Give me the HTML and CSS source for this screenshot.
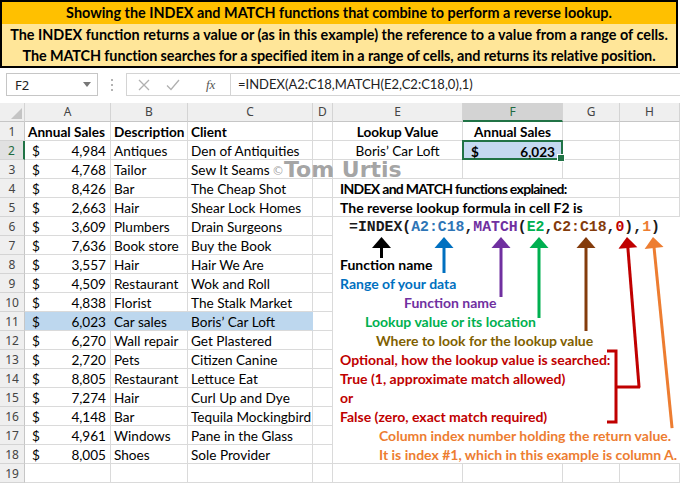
FILE: index.html
```html
<!DOCTYPE html>
<html>
<head>
<meta charset="utf-8">
<link rel="stylesheet" href="styles.css">
</head>
<body>
<div class="page">
  <div class="banner">
    <div class="b1">Showing the INDEX and MATCH functions that combine to perform a reverse lookup.</div>
    <div class="b2">The INDEX function returns a value or (as in this example) the reference to a value from a range of cells.</div>
    <div class="b2 b3">The MATCH function searches for a specified item in a range of cells, and returns its relative position.</div>
  </div>
  <div class="fbar">
    <div class="namebox"><span>F2</span><svg class="caret" width="8" height="5" viewBox="0 0 8 5"><polygon points="0,0 8,0 4,5" fill="#777"/></svg></div>
    <div class="dots"><svg width="4" height="14" viewBox="0 0 4 14"><circle cx="2" cy="2" r="1" fill="#9a9a9a"/><circle cx="2" cy="7" r="1" fill="#9a9a9a"/><circle cx="2" cy="12" r="1" fill="#9a9a9a"/></svg></div>
    <div class="fxbox">
      <div class="btns">
        <svg class="ico" width="12" height="12" viewBox="0 0 12 12"><path d="M1 1L11 11M11 1L1 11" stroke="#b0b0b0" stroke-width="1.3" fill="none"/></svg>
        <svg class="ico" width="14" height="12" viewBox="0 0 14 12"><path d="M1 6.5L5 10.5L13 1" stroke="#b0b0b0" stroke-width="1.3" fill="none"/></svg>
        <span class="fx">fx</span>
      </div>
      <div class="formula">=INDEX(A2:C18,MATCH(E2,C2:C18,0),1)</div>
    </div>
  </div>
  <div class="sheet">
    <div class="h corner"><svg width="11" height="11" viewBox="0 0 11 11"><polygon points="11,0 11,11 0,11" fill="#c4c4c4"/></svg></div>
    <div class="h">A</div><div class="h">B</div><div class="h">C</div><div class="h">D</div><div class="h">E</div><div class="h sel">F</div><div class="h">G</div><div class="h">H</div>

    <div class="rh">1</div><div class="c bd">Annual Sales</div><div class="c bd">Description</div><div class="c bd">Client</div><div class="c"></div><div class="c bd ctr">Lookup Value</div><div class="c bd ctr">Annual Sales</div><div class="c"></div><div class="c"></div>

    <div class="rh sel">2</div><div class="c a"><span>$</span><span>4,984</span></div><div class="c">Antiques</div><div class="c">Den of Antiquities</div><div class="c"></div><div class="c ctr">Boris’ Car Loft</div><div class="c a f2"><span>$</span><span>6,023</span></div><div class="c"></div><div class="c"></div>

    <div class="rh">3</div><div class="c a"><span>$</span><span>4,768</span></div><div class="c">Tailor</div><div class="c">Sew It Seams</div><div class="c"></div><div class="c"></div><div class="c"></div><div class="c"></div><div class="c"></div>

    <div class="rh">4</div><div class="c a"><span>$</span><span>8,426</span></div><div class="c">Bar</div><div class="c">The Cheap Shot</div><div class="c"></div><div class="c bd span3 ind tight">INDEX and MATCH functions explained:</div><div class="c"></div>

    <div class="rh">5</div><div class="c a"><span>$</span><span>2,663</span></div><div class="c">Hair</div><div class="c">Shear Lock Homes</div><div class="c"></div><div class="c bd span3 ind big">The reverse lookup formula in cell F2 is</div><div class="c"></div>

    <div class="rh">6</div><div class="c a"><span>$</span><span>3,609</span></div><div class="c">Plumbers</div><div class="c">Drain Surgeons</div><div class="c"></div>
    <div class="notes">
      <div class="ln code"><span class="k">=INDEX(</span><span class="cb">A2:C18</span><span class="k">,</span><span class="cp">MATCH</span><span class="k">(</span><span class="cg">E2</span><span class="k">,</span><span class="cbr">C2:C18</span><span class="k">,</span><span class="cr">0</span><span class="k">),</span><span class="co">1</span><span class="k">)</span></div>
      <div class="ln"></div>
      <div class="ln t-black">Function name</div>
      <div class="ln t-blue">Range of your data</div>
      <div class="ln t-purple">Function name</div>
      <div class="ln t-green">Lookup value or its location</div>
      <div class="ln t-brown">Where to look for the lookup value</div>
      <div class="ln t-red">Optional, how the lookup value is searched:</div>
      <div class="ln t-red">True (1, approximate match allowed)</div>
      <div class="ln t-red">or</div>
      <div class="ln t-red">False (zero, exact match required)</div>
      <div class="ln t-orange">Column index number holding the return value.</div>
      <div class="ln t-orange">It is index #1, which in this example is column A.</div>
    </div>

    <div class="rh">7</div><div class="c a"><span>$</span><span>7,636</span></div><div class="c">Book store</div><div class="c">Buy the Book</div><div class="c"></div>
    <div class="rh">8</div><div class="c a"><span>$</span><span>3,557</span></div><div class="c">Hair</div><div class="c">Hair We Are</div><div class="c"></div>
    <div class="rh">9</div><div class="c a"><span>$</span><span>4,509</span></div><div class="c">Restaurant</div><div class="c">Wok and Roll</div><div class="c"></div>
    <div class="rh">10</div><div class="c a"><span>$</span><span>4,838</span></div><div class="c">Florist</div><div class="c">The Stalk Market</div><div class="c"></div>
    <div class="rh">11</div><div class="c a hl"><span>$</span><span>6,023</span></div><div class="c hl">Car sales</div><div class="c hl">Boris’ Car Loft</div><div class="c"></div>
    <div class="rh">12</div><div class="c a"><span>$</span><span>6,270</span></div><div class="c">Wall repair</div><div class="c">Get Plastered</div><div class="c"></div>
    <div class="rh">13</div><div class="c a"><span>$</span><span>2,720</span></div><div class="c">Pets</div><div class="c">Citizen Canine</div><div class="c"></div>
    <div class="rh">14</div><div class="c a"><span>$</span><span>8,805</span></div><div class="c">Restaurant</div><div class="c">Lettuce Eat</div><div class="c"></div>
    <div class="rh">15</div><div class="c a"><span>$</span><span>7,274</span></div><div class="c">Hair</div><div class="c">Curl Up and Dye</div><div class="c"></div>
    <div class="rh">16</div><div class="c a"><span>$</span><span>4,148</span></div><div class="c">Bar</div><div class="c">Tequila Mockingbird</div><div class="c"></div>
    <div class="rh">17</div><div class="c a"><span>$</span><span>4,961</span></div><div class="c">Windows</div><div class="c">Pane in the Glass</div><div class="c"></div>
    <div class="rh">18</div><div class="c a"><span>$</span><span>8,005</span></div><div class="c">Shoes</div><div class="c">Sole Provider</div><div class="c"></div>

    <div class="rh">19</div><div class="c"></div><div class="c"></div><div class="c"></div><div class="c"></div><div class="c"></div><div class="c"></div><div class="c"></div><div class="c"></div>
  </div>

  <div class="wm"><span class="copy">©</span>Tom Urtis</div>

  <svg class="arrows" width="680" height="483" viewBox="0 0 680 483">
    <g fill="#000"><polygon points="381.5,237 372,248 391,248"/><rect x="380" y="247" width="3" height="11"/></g>
    <g fill="#0070c0"><polygon points="444,237 434.5,248 453.5,248"/><rect x="442.5" y="247" width="3" height="26"/></g>
    <g fill="#7030a0"><polygon points="501,237 491.5,248 510.5,248"/><rect x="499.5" y="247" width="3" height="50"/></g>
    <g fill="#00b050"><polygon points="539,237 529.5,248 548.5,248"/><rect x="537.5" y="247" width="3" height="71"/></g>
    <g fill="#843c0c"><polygon points="586,237 576.5,248 595.5,248"/><rect x="584.5" y="247" width="3" height="84"/></g>
    <g fill="#c00000" transform="rotate(-4.6 627 237)"><polygon points="627,237 617.5,248 636.5,248"/><rect x="625.5" y="247" width="3" height="141"/></g>
    <path d="M607 351H616V422H607M616 387H640" stroke="#c00000" stroke-width="3" fill="none"/>
    <g fill="#ed7d31" transform="rotate(-5.7 653 237)"><polygon points="653,237 643.5,248 662.5,248"/><rect x="651.5" y="247" width="3" height="182"/></g>
  </svg>
</div>
</body>
</html>
```
FILE: styles.css
```css
* { box-sizing: border-box; }
body { margin: 0; background: #fff; font-family: Lato, "Liberation Sans", sans-serif; color: #000; }
.page { position: relative; width: 680px; height: 483px; overflow: hidden; }

.banner { width: 678px; height: 68px; border: 2px solid #000; display: flex; flex-direction: column; font-weight: 700; font-size: 14.4px; text-align: center; white-space: nowrap; }
.b1 { height: 22px; line-height: 22px; background: #ffc000; }
.b2 { height: 21px; line-height: 21px; background: #ffe699; }
.b3 { letter-spacing: -0.1px; }

.fbar { height: 35px; display: flex; align-items: flex-start; padding: 5px 0 0 6px; }
.namebox { width: 92px; height: 23px; border: 1px solid #c6c6c6; display: flex; align-items: center; justify-content: space-between; padding: 0 6px 0 8px; font: 13px "Noto Sans", sans-serif; color: #222; }
.dots { width: 28px; height: 23px; display: flex; align-items: center; justify-content: center; }
.fxbox { flex: 1; height: 23px; border: 1px solid #d4d4d4; border-right: none; display: flex; }
.btns { width: 104px; border-right: 1px solid #d4d4d4; display: flex; align-items: center; padding-left: 11px; gap: 16px; }
.fx { font: italic 13px "Liberation Serif", serif; color: #555; margin-left: 10px; }
.formula { padding-left: 7px; font-size: 13px; line-height: 21px; color: #222; white-space: nowrap; }

.sheet { display: grid; grid-template-columns: 25px 86px 77px 125px 20px 130px 100px 57px 60px; grid-auto-rows: 19px; font-size: 13.6px; }
.h { background: #efefef; border-right: 1px solid #d4d4d4; border-bottom: 1px solid #c6c6c6; text-align: center; font: 12px "Noto Sans", sans-serif; color: #444; line-height: 18px; }
.h.sel { background: #d3d3d3; color: #1e6b41; border-bottom: 2px solid #217346; }
.corner { display: flex; align-items: flex-end; justify-content: flex-end; padding: 0 2px 2px 0; }
.rh { background: #efefef; border-right: 1px solid #c6c6c6; border-bottom: 1px solid #d4d4d4; text-align: center; font: 12px "Noto Sans", sans-serif; color: #444; line-height: 19px; }
.rh.sel { background: #e1e1e1; color: #1e6b41; border-right: 2px solid #217346; }

.c { border-right: 1px solid #dadada; border-bottom: 1px solid #dadada; padding: 1px 3px 0; line-height: 18px; white-space: nowrap; }
.bd { font-weight: 700; }
.ctr { text-align: center; }
.a { display: flex; justify-content: space-between; padding: 1px 4px 0 7px; }
.hl { background: #bdd7ee; border-right-color: #bdd7ee; }
.span3 { grid-column: span 3; }
.ind { padding-left: 7px; }
.tight { font-size: 14px; letter-spacing: -0.7px; }
.big { font-size: 14px; }
.f2 { position: relative; margin: -1px 0 0 -1px; background: #c5d9f1; border: 2px solid #217346; font-weight: 700; padding: 1px 6px 0 7px; }
.f2::after { content: ""; position: absolute; right: -4px; bottom: -4px; width: 6px; height: 6px; background: #217346; border: 1px solid #fff; }

.notes { grid-column: 6 / span 4; grid-row: span 13; background: #fff; border-bottom: 1px solid #dadada; display: grid; grid-template-rows: repeat(13, 19px); font-weight: 700; font-size: 14px; }
.ln { padding: 1px 0 0 7px; line-height: 18px; white-space: nowrap; }
.code { font-family: "Liberation Mono", monospace; font-size: 14.8px; padding-left: 16px; }
.k { color: #1a1a1a; }
.cb { color: #2e75b6; }
.cp { color: #7030a0; }
.cg { color: #00b050; }
.cbr { color: #843c0c; }
.cr { color: #c00000; }
.co { color: #ed7d31; }
.t-black { color: #000; }
.t-blue { color: #0070c0; }
.t-purple { color: #7030a0; padding-left: 71px; }
.t-green { color: #00b050; padding-left: 32px; }
.t-brown { color: #7f6000; padding-left: 43px; }
.t-red { color: #c00000; }
.t-orange { color: #ed7d31; padding-left: 46px; }

.wm { position: absolute; left: 272px; top: 158px; font-family: "DejaVu Sans", sans-serif; font-size: 22px; font-weight: 700; color: rgba(140,140,140,0.8); line-height: 24px; white-space: nowrap; }
.copy { font-size: 12px; font-weight: 400; vertical-align: 2px; margin-right: 0; }
.arrows { position: absolute; left: 0; top: 0; pointer-events: none; }
```
